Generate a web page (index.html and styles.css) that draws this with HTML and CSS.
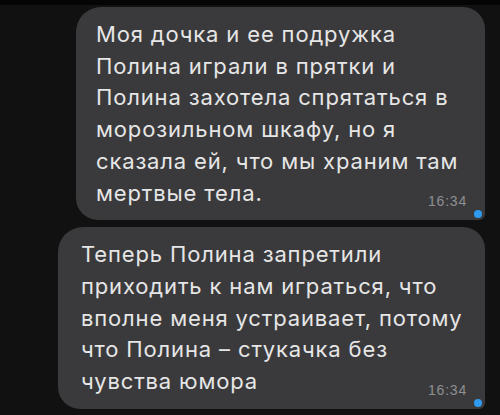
FILE: index.html
```html
<!DOCTYPE html>
<html lang="ru">
<head>
    <meta charset="UTF-8">
    <meta name="viewport" content="width=device-width, initial-scale=1.0">
    <title>Чат</title>
    <link rel="stylesheet" href="styles.css">
</head>
<body>
    <div class="chat">
        <div class="bubble bubble-first">
            <p class="text">Моя дочка и ее подружка<br>Полина играли в прятки и<br>Полина захотела спрятаться в<br>морозильном шкафу, но я<br>сказала ей, что мы храним там</p>
            <div class="last-line">
                <span>мертвые тела.</span>
                <span class="time">16:34</span>
            </div>
        </div>
        <div class="bubble bubble-second">
            <p class="text">Теперь Полина запретили<br>приходить к нам играться, что<br>вполне меня устраивает, потому<br>что Полина – стукачка без</p>
            <div class="last-line">
                <span>чувства юмора</span>
                <span class="time">16:34</span>
            </div>
        </div>
    </div>
</body>
</html>
```

FILE: styles.css
```css
body {
    margin: 0;
    background: #111112;
    border-top: 5px solid #050505;
    font-family: 'Inter', 'Liberation Sans', sans-serif;
    color: #e6e6e6;
}
.chat {
    display: flex;
    flex-direction: column;
    align-items: flex-end;
    gap: 7px;
    padding: 2px 15px 0 0;
}
.bubble {
    position: relative;
    box-sizing: border-box;
    background: #3a3a3c;
    border-radius: 25px 22px 6px 22px;
    padding: 12px 18px 11px 20px;
    font-size: 22px;
    letter-spacing: 0.85px;
    line-height: 31.7px;
}
.bubble-first {
    width: 409px;
}
.bubble-second {
    width: 427px;
    padding-left: 23px;
}
/* точка статуса в углу сообщения */
.bubble::after {
    content: '';
    position: absolute;
    right: 3px;
    bottom: 2px;
    width: 8px;
    height: 8px;
    border-radius: 50%;
    background: #2f9bf0;
}
.text {
    margin: 0;
}
.last-line {
    display: flex;
    justify-content: space-between;
    align-items: flex-end;
}
.time {
    font-family: 'Liberation Sans', sans-serif;
    font-size: 14px;
    letter-spacing: 0.8px;
    line-height: 16px;
    color: #8e8e92;
}
```
